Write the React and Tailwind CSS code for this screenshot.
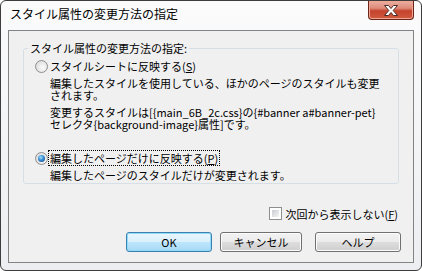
export default function App() {
  return (
    <div className="w-[422px] h-[271px] bg-white font-['Noto_Sans_CJK_JP','Noto_Sans',sans-serif] text-black">
      <div className="w-[422px] h-[271px] border border-[#3d3d3d] rounded-[6px] bg-[linear-gradient(to_bottom,#fbfbfc,#eceef1)] flex flex-col overflow-hidden">
        {/* Title bar */}
        <div className="h-[29px] flex items-start flex-none">
          <div className="pl-[9px] pt-[6px] text-[12px] leading-[14px] whitespace-nowrap">
            スタイル属性の変更方法の指定
          </div>
          <div className="ml-auto mr-[7px] w-[46px] h-[19px] flex items-center justify-center rounded-b-[4px] border border-t-0 border-[#6a2419] bg-[linear-gradient(to_bottom,#eab0a3_0%,#de8a78_40%,#c5432c_55%,#cf5a40_100%)] shadow-[inset_0_0_0_1px_#f0a693]">
            <svg width="14" height="11" viewBox="0 0 14 11">
              <polygon
                points="0.5,0.5 4.5,0.5 7,3.5 9.5,0.5 13.5,0.5 9.2,5.5 13.5,10.5 9.5,10.5 7,7.5 4.5,10.5 0.5,10.5 4.8,5.5"
                fill="#ffffff"
                stroke="#4a2a24"
                strokeWidth="1"
                strokeLinejoin="round"
              />
            </svg>
          </div>
        </div>

        {/* Client area */}
        <div className="mx-[7px] h-[233px] flex-none border border-[#838383] bg-[#f0f0f0] flex flex-col text-[11px]">
          <fieldset className="mt-[11px] mx-[14px] border border-[#d5dfe5] rounded-[3px] pb-[2px]">
            <legend className="ml-[4px] px-[2px] leading-[12px] whitespace-nowrap">
              スタイル属性の変更方法の指定:
            </legend>
            <div className="pl-[11px] pt-[6px] flex flex-col">
              <div className="h-[12px] flex items-center">
                <div className="w-[13px] h-[13px] flex-none rounded-full border border-[#8e8f8f] bg-[radial-gradient(circle_at_60%_60%,#fdfdfd,#d2d2d2)]"></div>
                <span className="ml-[2px] leading-[12px] whitespace-nowrap">
                  スタイルシートに反映する(<span className="underline">S</span>)
                </span>
              </div>
              <div className="pl-[15px] mt-[5px] leading-[12px] whitespace-nowrap">
                編集したスタイルを使用している、ほかのページのスタイルも変更
                <br />
                されます。
              </div>
              <div className="pl-[15px] mt-[5px] leading-[12px] whitespace-nowrap">
                変更するスタイルは[{"{"}main_6B_2c.css{"}"}の{"{"}#banner a#banner-pet{"}"}
                <br />
                セレクタ{"{"}background-image{"}"}属性]です。
              </div>
              <div className="h-[12px] mt-[22px] flex items-center">
                <div className="w-[13px] h-[13px] flex-none rounded-full border border-[#8e8f8f] bg-[radial-gradient(circle_at_60%_60%,#fdfdfd,#d2d2d2)] flex items-center justify-center">
                  <div className="w-[7px] h-[7px] rounded-full bg-[radial-gradient(circle_at_40%_35%,#9fe4ff_0%,#3a8ad0_45%,#0d3f7a_100%)]"></div>
                </div>
                <span className="ml-[2px] leading-[12px] whitespace-nowrap outline-1 outline-dotted outline-black outline-offset-1">
                  編集したページだけに反映する(<span className="underline">P</span>)
                </span>
              </div>
              <div className="pl-[15px] mt-[6px] leading-[11px] whitespace-nowrap">
                編集したページのスタイルだけが変更されます。
              </div>
            </div>
          </fieldset>

          {/* Checkbox row */}
          <div className="mt-[23px] h-[13px] flex items-center justify-end pr-[15px]">
            <div className="w-[13px] h-[13px] flex-none border border-[#8e8f8f] bg-white p-[2px]">
              <div className="w-full h-full bg-[linear-gradient(135deg,#c9ccd1,#f4f4f4)]"></div>
            </div>
            <span className="ml-[3px] leading-[12px] whitespace-nowrap">
              次回から表示しない(<span className="underline">F</span>)
            </span>
          </div>

          {/* Buttons */}
          <div className="mt-[12px] flex justify-end pr-[12px]">
            <div className="w-[86px] h-[20px] flex items-center justify-center rounded-[3px] border border-[#3c7fb1] bg-[linear-gradient(to_bottom,#eaf6fd_0%,#d9f0fc_50%,#bee6fd_50%,#a7d9f5_100%)] shadow-[inset_0_0_0_1px_#8fdcfa] leading-[12px]">
              OK
            </div>
            <div className="ml-[8px] w-[82px] h-[20px] flex items-center justify-center rounded-[3px] border border-[#707070] bg-[linear-gradient(to_bottom,#f2f2f2_0%,#ebebeb_50%,#dddddd_50%,#cfcfcf_100%)] shadow-[inset_0_0_0_1px_#fcfcfc] leading-[12px]">
              キャンセル
            </div>
            <div className="ml-[13px] w-[86px] h-[20px] flex items-center justify-center rounded-[3px] border border-[#707070] bg-[linear-gradient(to_bottom,#f2f2f2_0%,#ebebeb_50%,#dddddd_50%,#cfcfcf_100%)] shadow-[inset_0_0_0_1px_#fcfcfc] leading-[12px]">
              ヘルプ
            </div>
          </div>
        </div>
      </div>
    </div>
  );
}
